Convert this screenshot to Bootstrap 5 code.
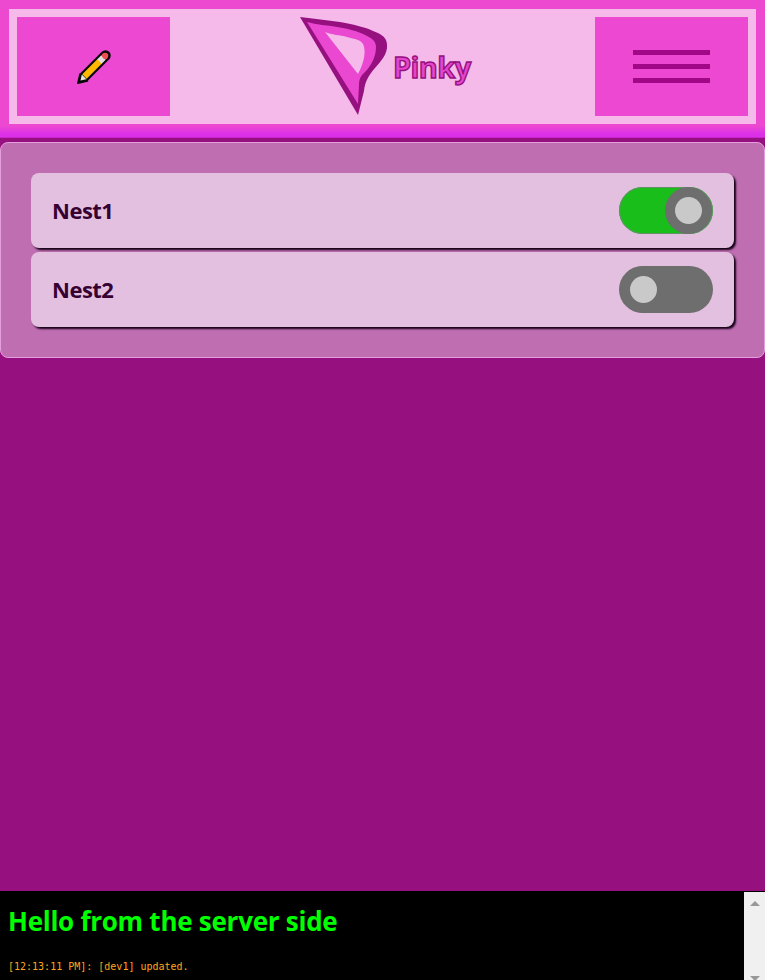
<!DOCTYPE html>
<html lang="en">
<head>
<meta charset="utf-8">
<meta name="viewport" content="width=device-width, initial-scale=1">
<title>Pinky</title>
<link href="https://cdn.jsdelivr.net/npm/bootstrap@5.3.0/dist/css/bootstrap.min.css" rel="stylesheet">
<style>
  body { background: #961080; font-family: "Open Sans", "Noto Sans", sans-serif; }
  .top-frame { height: 138px; padding: 9px 9px 14px; background: linear-gradient(#ec48d0 0, #ec48d0 126px, #dc30e8 134px, #dc30e8 137px, #b01cb0 138px); }
  .top-bar { height: 115px; padding: 8px; background: #f5b9ea; }
  .tool-btn { width: 153px; height: 99px; background: #ec48d2; border: 0; border-radius: 0; }
  .tool-btn:hover { background: #ec48d2; }
  .menu-line { width: 77px; height: 5px; background: #a00888; }
  .menu-lines { gap: 9px; }
  .brand { padding-left: 6px; }
  .brand-name { font-size: 29px; line-height: 40px; font-weight: 700; letter-spacing: -.6px; color: #e545cd; -webkit-text-stroke: 1.4px #961080; width: 78px; margin-left: 4px; margin-right: 1px; }
  .panel { margin-top: 4px; height: 216px; padding: 30px; background: #be6eb1; border: 1px solid #e59fdc; border-radius: 8px; }
  .nest-row { height: 75px; padding: 0 21px; background: #e3c0df; border-radius: 8px; box-shadow: 2px 2px 2px #160018; color: #360032; font-size: 22px; font-weight: 700; letter-spacing: -.5px; }
  .nest-list { gap: 4px; }
  .switch { width: 94px; height: 47px; padding: 0 1px; border-radius: 24px; background: #6e6e6e; overflow: hidden; }
  .switch.on { background: #1abe1a; box-shadow: inset 0 0 0 1px #64906a; }
  .knob { width: 47px; height: 47px; border-radius: 50%; background: #6e6e6e; }
  .knob-dot { width: 27px; height: 27px; border-radius: 50%; background: #c9c9c9; }
  .console { height: 89px; background: #000; }
  .console-title { font-size: 26px; line-height: 36px; font-weight: 700; letter-spacing: -.26px; color: #0f0; margin: 12px 0 0 8px; }
  .console-log { font-family: "DejaVu Sans Mono", "Liberation Mono", monospace; font-size: 10px; line-height: 14px; color: #ffa51e; margin: 21px 0 0 8px; }
  .scroll-track { width: 21px; background: #f0f0f0; margin-top: 1px; }
</style>
</head>
<body class="vh-100 d-flex flex-column overflow-hidden">
<header class="top-frame flex-shrink-0">
  <nav class="top-bar d-flex justify-content-between align-items-center">
    <button class="btn tool-btn p-0 d-flex align-items-center justify-content-center" aria-label="Edit">
      <svg width="36" height="36" viewBox="0 0 36 36" fill="none">
        <path d="M8.500 27.500 29.500 6.500" stroke="#080808" stroke-width="10.500" stroke-linecap="round"/>
        <path d="M1.800 34.200 4 25l7.500 7Z" fill="#080808" stroke="#080808" stroke-width="1.500" stroke-linejoin="round"/>
        <path d="M4.500 31.500 5.800 25.500 10.500 30.200Z" fill="#e9e5de"/>
        <path d="M8.500 27.500 24 12" stroke="#ffb900" stroke-width="6.200"/>
        <path d="m23.500 12.500 4-4" stroke="#e5dede" stroke-width="6.200"/>
        <path d="m27.500 8.500 1.500-1.500" stroke="#ee4f55" stroke-width="6.200"/>
        <circle cx="29.200" cy="6.800" r="3.100" fill="#ee4f55"/>
      </svg>
    </button>
    <div class="brand d-flex align-items-center">
      <svg width="90" height="101" viewBox="0 0 90 101">
        <path d="M1 1C15 3 28 4 41 6C56 9 66 11 74 15C83 18 88 22 88 29C89 38 81 46 76 52C70 59 66 65 65 75L59 99Z" fill="#961080"/>
        <path d="M8 6C18 9 28 9 38 11C50 13 58 15 64 18C73 22 77 25 77 31C77 42 71 51 66 56Q60 61 60 68L59 88Z" fill="#eb48d1"/>
        <path d="M26 16C33 19 41 19 48 21C56 23 62 24 64 28C67 34 66 45 59 58Z" fill="#f5b9ea"/>
      </svg>
      <div class="brand-name">Pinky</div>
    </div>
    <button class="btn tool-btn menu-lines p-0 d-flex flex-column align-items-center justify-content-center" aria-label="Menu">
      <span class="menu-line"></span><span class="menu-line"></span><span class="menu-line"></span>
    </button>
  </nav>
</header>
<main class="flex-grow-1">
  <section class="panel">
    <div class="nest-list d-flex flex-column">
      <div class="nest-row d-flex align-items-center justify-content-between">
        <span>Nest1</span>
        <div class="switch on d-flex justify-content-end"><div class="knob d-flex align-items-center justify-content-center"><div class="knob-dot"></div></div></div>
      </div>
      <div class="nest-row d-flex align-items-center justify-content-between">
        <span>Nest2</span>
        <div class="switch d-flex"><div class="knob d-flex align-items-center justify-content-center"><div class="knob-dot"></div></div></div>
      </div>
    </div>
  </section>
</main>
<footer class="console d-flex justify-content-between flex-shrink-0">
  <div>
    <h1 class="console-title">Hello from the server side</h1>
    <p class="console-log">[12:13:11 PM]: [dev1] updated.</p>
  </div>
  <div class="scroll-track d-flex flex-column justify-content-between align-items-center pt-2">
    <svg width="10" height="7" viewBox="0 0 10 7"><path d="M0 6 5 1l5 5Z" fill="#989898"/></svg>
    <svg width="10" height="5" viewBox="0 0 10 5"><path d="M0 1h10L5 6Z" fill="#989898"/></svg>
  </div>
</footer>
<script src="https://cdn.jsdelivr.net/npm/bootstrap@5.3.0/dist/js/bootstrap.bundle.min.js"></script>
</body>
</html>
